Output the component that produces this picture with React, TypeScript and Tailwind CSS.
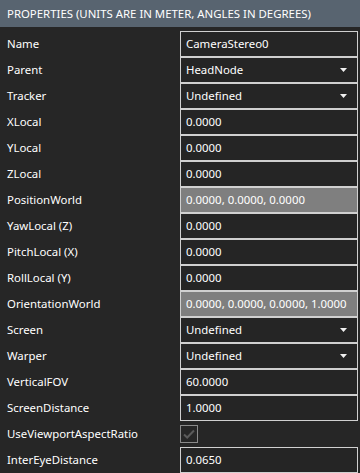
type Row = {
  label: string;
  value?: string;
  kind: "text" | "select" | "readonly" | "check";
};

const rows: Row[] = [
  { label: "Name", value: "CameraStereo0", kind: "text" },
  { label: "Parent", value: "HeadNode", kind: "select" },
  { label: "Tracker", value: "Undefined", kind: "select" },
  { label: "XLocal", value: "0.0000", kind: "text" },
  { label: "YLocal", value: "0.0000", kind: "text" },
  { label: "ZLocal", value: "0.0000", kind: "text" },
  { label: "PositionWorld", value: "0.0000, 0.0000, 0.0000", kind: "readonly" },
  { label: "YawLocal (Z)", value: "0.0000", kind: "text" },
  { label: "PitchLocal (X)", value: "0.0000", kind: "text" },
  { label: "RollLocal (Y)", value: "0.0000", kind: "text" },
  { label: "OrientationWorld", value: "0.0000, 0.0000, 0.0000, 1.0000", kind: "readonly" },
  { label: "Screen", value: "Undefined", kind: "select" },
  { label: "Warper", value: "Undefined", kind: "select" },
  { label: "VerticalFOV", value: "60.0000", kind: "text" },
  { label: "ScreenDistance", value: "1.0000", kind: "text" },
  { label: "UseViewportAspectRatio", kind: "check" },
  { label: "InterEyeDistance", value: "0.0650", kind: "text" },
];

function Field({ row }: { row: Row }) {
  if (row.kind === "check") {
    return (
      <div className="flex h-[26px] items-center">
        <div className="flex h-[18px] w-[18px] items-center justify-center border border-[#8a8a8a]">
          <svg width="12" height="10" viewBox="0 0 12 10">
            <path d="M1 5.5 L4.2 8.5 L11 1.5" fill="none" stroke="#5a5a5a" strokeWidth="2" />
          </svg>
        </div>
      </div>
    );
  }
  return (
    <div
      className={`flex h-[26px] items-center justify-between border border-[#d0d0d0] pl-[5px] pr-[10px] ${
        row.kind === "readonly" ? "bg-[#7f7f7f]" : "bg-[#252525]"
      }`}
    >
      <span className="whitespace-nowrap">{row.value}</span>
      {row.kind === "select" && (
        <svg width="7" height="4" viewBox="0 0 7 4">
          <path d="M0 0 H7 L3.5 4 Z" fill="#f0f0f0" />
        </svg>
      )}
    </div>
  );
}

export default function App() {
  return (
    <div
      className="h-[473px] w-[360px] overflow-hidden bg-[#262626] text-[11.4px] text-white"
      style={{ fontFamily: '"Noto Sans", "Open Sans", sans-serif' }}
    >
      <div className="flex h-[27px] items-center bg-[#586470] pl-[7px]">
        PROPERTIES (UNITS ARE IN METER, ANGLES IN DEGREES)
      </div>
      <div className="mt-[4px] grid grid-cols-[180px_178px]">
        {rows.map((row) => (
          <div key={row.label} className="contents">
            <div className="flex h-[26px] items-center pl-[7px]">{row.label}</div>
            <Field row={row} />
          </div>
        ))}
      </div>
    </div>
  );
}
